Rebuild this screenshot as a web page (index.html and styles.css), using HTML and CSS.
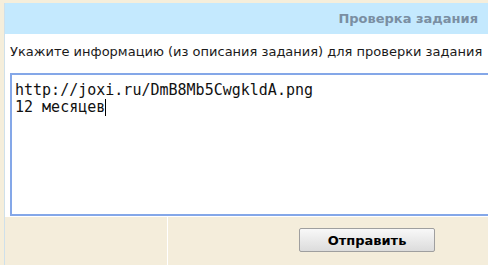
FILE: index.html
```html
<!DOCTYPE html>
<html>
<head>
<meta charset="utf-8">
<link rel="stylesheet" href="styles.css">
</head>
<body>
<div class="page">
  <div class="panel">
    <div class="header"><span class="title">Проверка задания</span></div>
    <div class="content">
      <div class="hint">Укажите информацию (из описания задания) для проверки задания</div>
      <div class="area">http://joxi.ru/DmB8Mb5CwgkldA.png
12 месяцев<span class="caret"></span></div>
    </div>
    <div class="footer">
      <div class="cell-left"></div>
      <div class="cell-right"><button class="btn">Отправить</button></div>
    </div>
  </div>
</div>
</body>
</html>
```
FILE: styles.css
```css
html, body {
  margin: 0;
  padding: 0;
  overflow: hidden;
  background: #f5eedb;
}
.page {
  width: 488px;
  height: 265px;
  overflow: hidden;
  padding-top: 3px;
  padding-left: 4px;
  box-sizing: border-box;
}
.panel {
  width: 600px;
  border-left: 1px solid #cfe0ea;
  background: #ffffff;
}
.header {
  height: 31px;
  background: #c4e9fe;
  width: 483px;
  display: flex;
  justify-content: flex-end;
  align-items: center;
  box-sizing: border-box;
  padding-right: 10px;
}
.title {
  font-family: "DejaVu Sans", sans-serif;
  font-weight: bold;
  font-size: 13px;
  color: #7a8ea2;
}
.content {
  padding: 10px 0 1px 5px;
}
.hint {
  font-family: "DejaVu Sans", sans-serif;
  font-size: 13px;
  line-height: 16px;
  color: #1a1a1a;
  white-space: nowrap;
}
.area {
  margin-top: 13px;
  width: 560px;
  height: 143px;
  border: 2px solid #84a7e8;
  padding: 7px 3px;
  box-sizing: border-box;
  font-family: "DejaVu Sans Mono", monospace;
  font-size: 15px;
  line-height: 17px;
  color: #111;
  white-space: pre;
}
.caret {
  display: inline-block;
  width: 1px;
  height: 17px;
  background: #000;
  vertical-align: top;
}
.footer {
  display: flex;
  height: 48px;
  background: #f4eddb;
}
.cell-left {
  width: 162px;
  border-right: 1px solid #ffffff;
}
.cell-right {
  flex: 1;
  padding-top: 11px;
  padding-left: 131px;
}
.btn {
  width: 136px;
  height: 24px;
  border: 1px solid #9f9f9f;
  border-radius: 2px;
  background: linear-gradient(#f8f8f8, #dcdcdc);
  font-family: "DejaVu Sans", sans-serif;
  font-weight: bold;
  font-size: 13px;
  color: #000;
  padding: 0;
}
```
